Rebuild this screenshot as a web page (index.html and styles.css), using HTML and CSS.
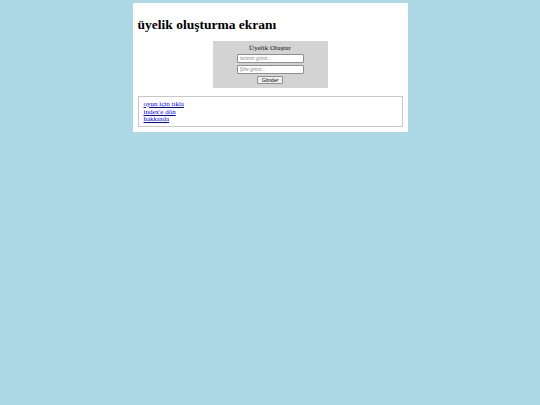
FILE: index.html
```html
<!DOCTYPE html>
<html lang="tr">
<head>
<meta charset="utf-8">
<title>üyelik oluşturma ekranı</title>
<link rel="stylesheet" href="styles.css">
</head>
<body>
<div class="page">
  <h1 class="title">üyelik oluşturma ekranı</h1>
  <form class="signup">
    <div class="signup-title">Üyelik Oluştur</div>
    <input class="field" type="text" placeholder="İsminizi giriniz...">
    <input class="field" type="password" placeholder="Şifre giriniz...">
    <button class="submit" type="button">Gönder</button>
  </form>
  <div class="links">
    <a href="#">oyun için tıkla</a>
    <a href="#">index'e dön</a>
    <a href="#">hakkında</a>
  </div>
</div>
</body>
</html>
```

FILE: styles.css
```css
html, body {
  margin: 0;
  padding: 0;
}
body {
  background: #add8e6;
  font-family: "Liberation Serif", "Times New Roman", serif;
  padding-top: 3px;
}
.page {
  width: 275px;
  margin: 0 auto;
  background: #fff;
  padding: 5px;
  box-sizing: border-box;
  display: flex;
  flex-direction: column;
}
.title {
  margin: 9px 0 8px 0;
  font-size: 13.5px;
  font-weight: bold;
  line-height: 16px;
  color: #000;
}
.signup {
  align-self: center;
  width: 115px;
  height: 47px;
  box-sizing: border-box;
  background: #d3d3d3;
  display: flex;
  flex-direction: column;
  align-items: center;
  padding-top: 3px;
  gap: 2px;
}
.signup-title {
  font-size: 7px;
  line-height: 9px;
  color: #111;
  margin-bottom: -1px;
}
.field {
  width: 67px;
  height: 9px;
  box-sizing: border-box;
  margin: 0;
  padding: 0 2px;
  border: 1px solid #8f8f8f;
  border-radius: 1px;
  background: #fff;
  font-family: "Liberation Sans", Arial, sans-serif;
  font-size: 4.5px;
}
.field::placeholder {
  color: #8a8a8a;
}
.submit {
  width: 26px;
  height: 8px;
  box-sizing: border-box;
  margin: 0;
  padding: 0;
  border: 1px solid #8f8f8f;
  border-radius: 1px;
  background: #efefef;
  font-family: "Liberation Sans", Arial, sans-serif;
  font-size: 5px;
  line-height: 6px;
  color: #000;
}
.links {
  margin-top: 8px;
  border: 1px solid #c8c8c8;
  padding: 4px 5px 2px 5px;
  display: flex;
  flex-direction: column;
}
.links a {
  color: #0000ee;
  font-size: 7px;
  line-height: 7.5px;
}
```
